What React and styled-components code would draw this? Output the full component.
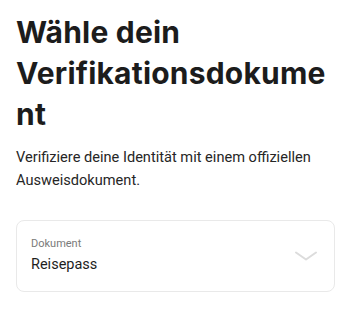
import * as React from 'react';
import styled, { createGlobalStyle } from 'styled-components';

const GlobalStyle = createGlobalStyle`
  html, body {
    margin: 0;
    padding: 0;
    background: #ffffff;
  }
  body {
    font-family: Roboto, "Noto Sans", sans-serif;
    -webkit-font-smoothing: antialiased;
  }
`;

const Screen = styled.div`
  width: 350px;
  min-height: 317px;
  box-sizing: border-box;
  padding: 12px 15px 0 16px;
  display: flex;
  flex-direction: column;
`;

const Title = styled.h1`
  margin: 0;
  font-family: Inter, sans-serif;
  font-weight: 700;
  font-size: 30px;
  line-height: 41px;
  letter-spacing: 0.2px;
  color: #1c1c1c;
  overflow-wrap: anywhere;
`;

const Lead = styled.p`
  margin: 11px 0 0;
  font-family: Roboto, sans-serif;
  font-size: 14.6px;
  line-height: 23px;
  color: #262626;
`;

const Select = styled.div`
  margin-top: 28px;
  height: 72px;
  box-sizing: border-box;
  border: 1px solid #e9e9e9;
  border-radius: 8px;
  padding: 0 17px 0 14px;
  display: flex;
  align-items: center;
  justify-content: space-between;
`;

const Field = styled.div`
  display: flex;
  flex-direction: column;
  gap: 4px;
`;

const Label = styled.span`
  font-size: 11px;
  line-height: 14px;
  color: #7a7a7a;
`;

const Value = styled.span`
  font-size: 14.5px;
  line-height: 20px;
  color: #1e1e1e;
`;

const Chevron = () => (
  <svg width="22" height="10" viewBox="0 0 22 10" fill="none">
    <path d="M1 1.5 L11 8.5 L21 1.5" stroke="#dcdcdc" strokeWidth="2" strokeLinecap="round" strokeLinejoin="round" />
  </svg>
);

const App = () => {
  return (
    <>
      <GlobalStyle />
      <Screen>
        <Title>Wähle dein Verifikationsdokument</Title>
        <Lead>Verifiziere deine Identität mit einem offiziellen Ausweisdokument.</Lead>
        <Select>
          <Field>
            <Label>Dokument</Label>
            <Value>Reisepass</Value>
          </Field>
          <Chevron />
        </Select>
      </Screen>
    </>
  );
};

export default App;
